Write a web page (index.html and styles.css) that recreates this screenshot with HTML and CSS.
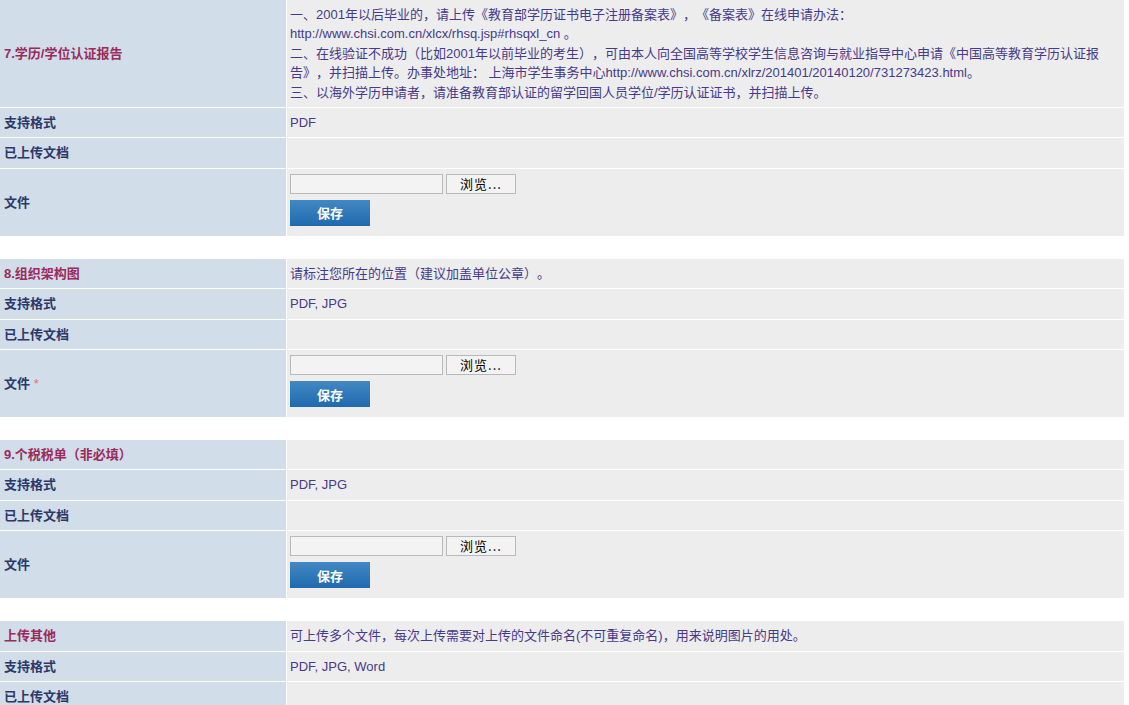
FILE: index.html
```html
<!DOCTYPE html>
<html lang="zh-CN">
<head>
  <meta charset="UTF-8" />
  <title>上传材料</title>
  <link rel="stylesheet" href="styles.css">
</head>
<body>
  <table class="upload">
    <tr>
      <th class="title">7.学历/学位认证报告</th>
      <td>一、2001年以后毕业的，请上传《教育部学历证书电子注册备案表》，《备案表》在线申请办法：<br>http://www.chsi.com.cn/xlcx/rhsq.jsp#rhsqxl_cn 。<br>二、在线验证不成功（比如2001年以前毕业的考生），可由本人向全国高等学校学生信息咨询与就业指导中心申请《中国高等教育学历认证报告》，并扫描上传。办事处地址： 上海市学生事务中心http://www.chsi.com.cn/xlrz/201401/20140120/731273423.html。<br>三、以海外学历申请者，请准备教育部认证的留学回国人员学位/学历认证证书，并扫描上传。</td>
    </tr>
    <tr><th>支持格式</th><td>PDF</td></tr>
    <tr><th>已上传文档</th><td></td></tr>
    <tr>
      <th>文件</th>
      <td class="file-cell">
        <div class="file-line"><input type="text" class="file-path"><button class="browse">浏览...</button></div>
        <button class="save">保存</button>
      </td>
    </tr>
  </table>

  <table class="upload">
    <tr><th class="title">8.组织架构图</th><td>请标注您所在的位置（建议加盖单位公章）。</td></tr>
    <tr><th>支持格式</th><td>PDF, JPG</td></tr>
    <tr><th>已上传文档</th><td></td></tr>
    <tr>
      <th>文件 <span class="req">*</span></th>
      <td class="file-cell">
        <div class="file-line"><input type="text" class="file-path"><button class="browse">浏览...</button></div>
        <button class="save">保存</button>
      </td>
    </tr>
  </table>

  <table class="upload">
    <tr><th class="title">9.个税税单（非必填）</th><td></td></tr>
    <tr><th>支持格式</th><td>PDF, JPG</td></tr>
    <tr><th>已上传文档</th><td></td></tr>
    <tr>
      <th>文件</th>
      <td class="file-cell">
        <div class="file-line"><input type="text" class="file-path"><button class="browse">浏览...</button></div>
        <button class="save">保存</button>
      </td>
    </tr>
  </table>

  <table class="upload">
    <tr><th class="title">上传其他</th><td>可上传多个文件，每次上传需要对上传的文件命名(不可重复命名)，用来说明图片的用处。</td></tr>
    <tr><th>支持格式</th><td>PDF, JPG, Word</td></tr>
    <tr><th>已上传文档</th><td></td></tr>
  </table>
</body>
</html>
```

FILE: styles.css
```css
* {
  box-sizing: border-box;
}

body {
  margin: 0;
  background: #fff;
  font-family: "Liberation Sans", Arial, "Noto Sans CJK SC", sans-serif;
  font-size: 13px;
  text-spacing-trim: space-all;
}

.upload {
  width: 1124px;
  border-collapse: separate;
  border-spacing: 0;
  margin-bottom: 23px;
}

.upload th,
.upload td {
  padding: 5px 3px;
  line-height: 19.4px;
  border-bottom: 1px solid #fff;
  vertical-align: middle;
  text-align: left;
}

.upload th {
  width: 287px;
  background: #d1dde8;
  border-right: 1px solid #fff;
  color: #2b3868;
  font-weight: bold;
  padding-left: 4px;
}

.upload th.title {
  color: #9a2b5c;
}

.upload td {
  background: #ededed;
  color: #463a8a;
}

.upload tr:last-child th,
.upload tr:last-child td {
  border-bottom: none;
}

.req {
  color: #e0707a;
  font-weight: normal;
}

.file-cell {
  padding-bottom: 10px !important;
}

.file-line {
  display: flex;
  gap: 3px;
  height: 20px;
  margin-bottom: 6px;
}

.file-path {
  width: 153px;
  height: 20px;
  margin: 0;
  border: 1px solid #b9b9b9;
  background: #f3f3f3;
  padding: 0 3px;
}

.browse {
  width: 70px;
  height: 20px;
  margin: 0;
  padding: 0;
  border: 1px solid #b9b9b9;
  background: #f3f3f3;
  color: #000;
  font-family: "Noto Sans CJK SC", sans-serif;
  font-size: 13px;
  line-height: 18px;
  letter-spacing: 1px;
}

.save {
  display: block;
  width: 80px;
  height: 26px;
  border: none;
  margin: 0;
  background: linear-gradient(#4289c3, #1f69ae);
  color: #fff;
  font-family: "Noto Sans CJK SC", sans-serif;
  font-weight: bold;
  font-size: 13px;
  cursor: pointer;
}
```
